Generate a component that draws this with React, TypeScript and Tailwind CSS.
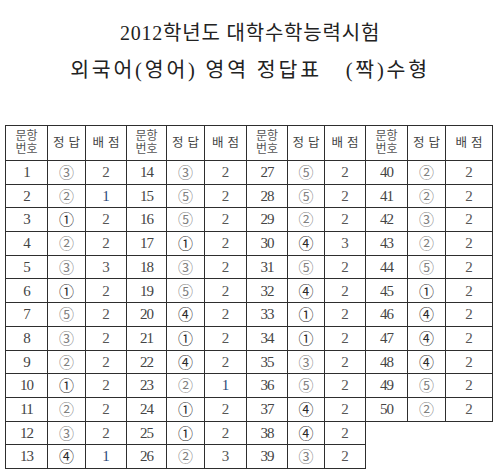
import { Fragment } from "react";

const circled = ["", "①", "②", "③", "④", "⑤"];

// [번호, 정답, 배점]
const answers: [number, number, number][] = [
  [1, 3, 2], [2, 2, 1], [3, 1, 2], [4, 2, 2], [5, 3, 3], [6, 1, 2], [7, 5, 2],
  [8, 3, 2], [9, 2, 2], [10, 1, 2], [11, 2, 2], [12, 3, 2], [13, 4, 1],
  [14, 3, 2], [15, 5, 2], [16, 5, 2], [17, 1, 2], [18, 3, 2], [19, 5, 2], [20, 4, 2],
  [21, 1, 2], [22, 4, 2], [23, 2, 1], [24, 1, 2], [25, 1, 2], [26, 2, 3],
  [27, 5, 2], [28, 5, 2], [29, 2, 2], [30, 4, 3], [31, 5, 2], [32, 4, 2], [33, 1, 2],
  [34, 1, 2], [35, 3, 2], [36, 5, 2], [37, 4, 2], [38, 4, 2], [39, 3, 2],
  [40, 2, 2], [41, 2, 2], [42, 3, 2], [43, 2, 2], [44, 5, 2], [45, 1, 2], [46, 4, 2],
  [47, 4, 2], [48, 4, 2], [49, 5, 2], [50, 2, 2],
];

const widths = ["w-[42px]", "w-[38px]", "w-[41px]", "w-[40px]", "w-[38px]", "w-[42px]", "w-[41px]", "w-[37px]", "w-[41px]", "w-[42px]", "w-[38px]", "w-[47px]"];

const cell = "border-[1.5px] border-[#2e2e2e] text-center align-middle p-0 whitespace-nowrap";

const App = () => {
  const rows = Array.from({ length: 13 }, (_, r) =>
    [0, 1, 2, 3].map((g) => answers[g * 13 + r])
  );

  return (
    <div className="w-[500px] h-[476px] bg-white overflow-hidden font-['Liberation_Serif','Noto_Sans_CJK_KR',serif] text-[#444]">
      <div className="pt-[21px] text-center text-[#222]">
        <h1 className="text-[20px] leading-[24px] tracking-[0.8px] font-normal">2012학년도 대학수학능력시험</h1>
        <h2 className="mt-[13px] text-[20.5px] leading-[24px] tracking-[2.8px] font-normal whitespace-pre">
          외국어(영어) 영역 정답표{"   "}(짝)수형
        </h2>
      </div>

      <table className="mt-[43px] ml-[5px] border-collapse table-fixed w-[487px]">
        <colgroup>
          {widths.map((w, i) => (
            <col key={i} className={w} />
          ))}
        </colgroup>
        <thead>
          <tr className="h-[35px]">
            {[0, 1, 2, 3].map((g) => (
              <Fragment key={g}>
                <th className={`${cell} text-[12px] leading-[13px] font-normal text-[#555]`}>
                  문항
                  <br />
                  번호
                </th>
                <th className={`${cell} text-[12.5px] font-normal tracking-[4px] pl-[4px] text-[#444]`}>
                  정답
                </th>
                <th className={`${cell} text-[12.5px] font-normal tracking-[4px] pl-[4px] text-[#444]`}>
                  배점
                </th>
              </Fragment>
            ))}
          </tr>
        </thead>
        <tbody>
          {rows.map((row, r) => (
            <tr key={r} className="h-[23.7px]">
              {row.map((item, g) =>
                item ? (
                  <Fragment key={g}>
                    <td className={`${cell} text-[15px] tracking-[-1px] text-[#444]`}>{item[0]}</td>
                    <td
                      className={`${cell} text-[15px] font-['Noto_Sans_CJK_KR',sans-serif] ${
                        item[1] === 1 || item[1] === 4 ? "text-[#2a2a2a]" : "text-[#808080]"
                      }`}
                    >
                      {circled[item[1]]}
                    </td>
                    <td className={`${cell} text-[15px] ${item[2] === 1 ? "text-[#2c4a78]" : "text-[#555]"}`}>
                      {item[2]}
                    </td>
                  </Fragment>
                ) : (
                  <Fragment key={g}>
                    <td className="p-0" />
                    <td className="p-0" />
                    <td className="p-0" />
                  </Fragment>
                )
              )}
            </tr>
          ))}
        </tbody>
      </table>
    </div>
  );
};

export default App;
